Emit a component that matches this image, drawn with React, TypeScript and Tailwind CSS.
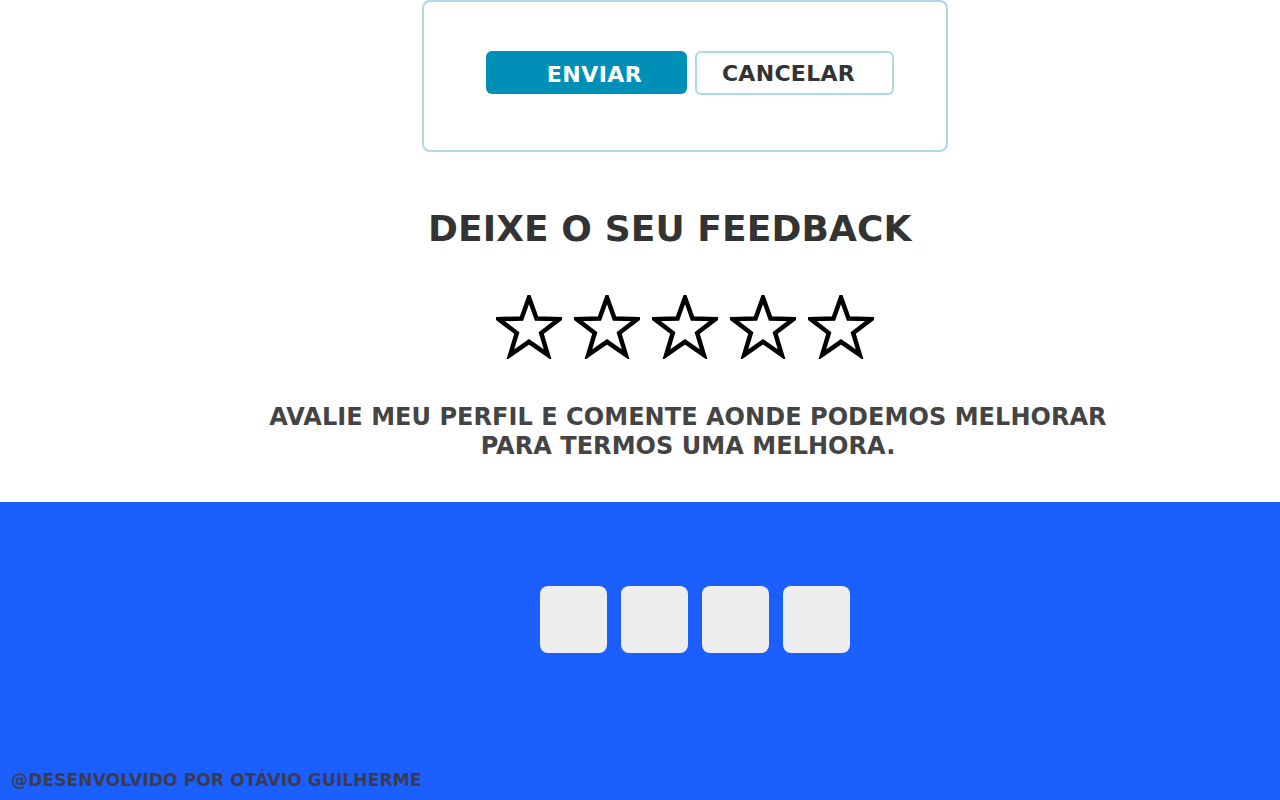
import React from "react";

const font = { fontFamily: '"DejaVu Sans", Verdana, sans-serif' };

function Star() {
  return (
    <svg width="66" height="64" viewBox="0 0 66 64" fill="none">
      <polygon
        points="33,2.5 40.5,23.6 63.4,24.1 45.2,38 51.8,59.9 33,46.8 14.2,59.9 20.8,38 2.6,24.1 25.5,23.6"
        stroke="#000"
        strokeWidth="4.5"
        strokeLinejoin="miter"
        fill="#fff"
      />
    </svg>
  );
}

export default function App() {
  return (
    <div className="w-[1280px] min-h-[800px] bg-white" style={font}>
      <section className="flex h-[502px] flex-col">
        <div className="ml-[422px] h-[152px] w-[526px] rounded-lg border-2 border-[#add8e6] pt-[49px] pl-[62px]">
          <div className="flex gap-2">
            <button
              type="button"
              className="flex h-[43px] w-[201px] items-center justify-center rounded-md bg-[#0090b7] pt-[3px] pl-4 text-[22px] font-bold tracking-[0.5px] text-white"
            >
              ENVIAR
            </button>
            <button
              type="button"
              className="flex h-[44px] w-[199px] items-center justify-center rounded-md border-2 border-[#add8e6] bg-white pt-[1px] pr-3 text-[22px] font-bold tracking-[0.3px] text-[#333]"
            >
              CANCELAR
            </button>
          </div>
        </div>

        <h1 className="mt-[57px] ml-[428px] text-[36px] font-bold leading-[40px] tracking-[0.1px] text-[#333]">
          DEIXE O SEU FEEDBACK
        </h1>

        <div className="mt-[46px] ml-[496px] flex gap-3">
          {[0, 1, 2, 3, 4].map((i) => (
            <Star key={i} />
          ))}
        </div>

        <p className="mt-[44px] ml-[248px] w-[880px] text-center text-[24px] font-bold leading-[29px] tracking-[0.05px] text-[#444]">
          AVALIE MEU PERFIL E COMENTE AONDE PODEMOS MELHORAR
          <br />
          PARA TERMOS UMA MELHORA.
        </p>
      </section>

      <footer className="flex h-[298px] flex-col bg-[#1b5fff]">
        <div className="mt-[84px] ml-[540px] flex gap-[14px]">
          {[0, 1, 2, 3].map((i) => (
            <div key={i} className="h-[67px] w-[67px] rounded-lg bg-[#eeeeee]" />
          ))}
        </div>
        <p className="mt-auto mb-[10px] ml-[11px] text-[17px] font-bold leading-5 tracking-[0.15px] text-[#3b3b4f]">
          @DESENVOLVIDO POR OTÁVIO GUILHERME
        </p>
      </footer>
    </div>
  );
}
